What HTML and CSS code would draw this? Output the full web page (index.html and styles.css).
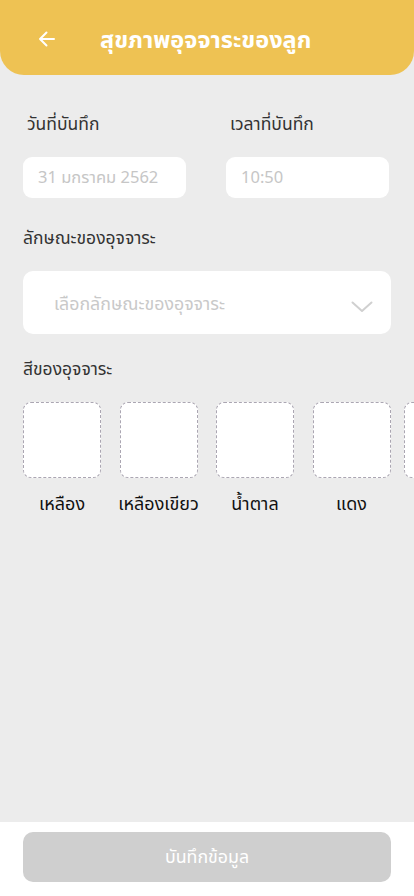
FILE: index.html
```html
<!DOCTYPE html>
<html lang="th">
<head>
<meta charset="utf-8">
<link rel="stylesheet" href="styles.css">
</head>
<body>
<div class="app">
  <header class="header">
    <svg class="back" width="20" height="20" viewBox="0 0 20 20"><path d="M17 10H3M9.5 3.5L3 10l6.5 6.5" fill="none" stroke="#fff" stroke-width="2" stroke-linecap="round" stroke-linejoin="round"/></svg>
    <h1 class="title">สุขภาพอุจจาระของลูก</h1>
  </header>
  <main class="content">
    <div class="row2">
      <div class="field">
        <div class="label">วันที่บันทึก</div>
        <div class="input">31 มกราคม 2562</div>
      </div>
      <div class="field">
        <div class="label">เวลาที่บันทึก</div>
        <div class="input">10:50</div>
      </div>
    </div>
    <div class="label label-wide">ลักษณะของอุจจาระ</div>
    <div class="select">
      <span>เลือกลักษณะของอุจจาระ</span>
      <svg width="22" height="12" viewBox="0 0 22 12"><path d="M1.5 1.5L11 10l9.5-8.5" fill="none" stroke="#d0d0d0" stroke-width="2" stroke-linecap="round" stroke-linejoin="round"/></svg>
    </div>
    <div class="label label-wide">สีของอุจจาระ</div>
    <div class="swatches">
      <div class="swatch"><div class="box"></div><div class="name">เหลือง</div></div>
      <div class="swatch"><div class="box"></div><div class="name">เหลืองเขียว</div></div>
      <div class="swatch"><div class="box"></div><div class="name">น้ำตาล</div></div>
      <div class="swatch"><div class="box"></div><div class="name">แดง</div></div>
      <div class="swatch swatch-last"><div class="box"></div></div>
    </div>
  </main>
  <footer class="footer">
    <button class="save">บันทึกข้อมูล</button>
  </footer>
</div>
</body>
</html>
```
FILE: styles.css
```css
* { box-sizing: border-box; }
html, body { margin: 0; padding: 0; }
body {
  background: #ececec;
  font-family: "Noto Sans Thai", "Noto Sans Thai UI", "Noto Sans", sans-serif;
  color: #222;
}
.app {
  width: 414px;
  height: 896px;
  display: flex;
  flex-direction: column;
  overflow: hidden;
}
.header {
  height: 75px;
  background: #eec253;
  border-radius: 0 0 24px 24px;
  display: flex;
  align-items: center;
  padding: 6px 0 0 37px;
  flex-shrink: 0;
}
.back { display: block; margin-top: -3px; }
.title {
  margin: 0 0 0 43px;
  color: #fff;
  font-size: 23.5px;
  font-weight: 700;
}
.content {
  flex: 1;
  padding: 38px 0 0 23px;
  overflow: hidden;
}
.row2 { display: flex; gap: 40px; }
.field { width: 163px; }
.label {
  font-size: 17.5px;
  color: #333;
  line-height: 24px;
  padding-left: 4px;
  height: 24px;
}
.label-wide { padding-left: 0; }
.input {
  margin-top: 20px;
  height: 41px;
  background: #fff;
  border-radius: 9px;
  font-size: 16.5px;
  color: #c6c6c6;
  display: flex;
  align-items: center;
  padding-left: 15px;
}
.row2 + .label { margin-top: 29px; }
.select {
  margin-top: 20px;
  width: 368px;
  height: 63px;
  background: #fff;
  border-radius: 10px;
  display: flex;
  align-items: center;
  justify-content: space-between;
  padding: 4px 18px 0 31px;
  font-size: 17.8px;
  color: #c9c9c9;
}
.select svg { margin-top: 4px; }
.select + .label { margin-top: 24px; }
.swatches {
  margin-top: 20px;
  display: flex;
  gap: 18.5px;
  width: 391px;
  overflow: hidden;
}
.swatch {
  flex: 0 0 78px;
  min-width: 0;
  display: flex;
  flex-direction: column;
  align-items: center;
}
.swatch-last { margin-left: -5px; }
.box {
  width: 78px;
  height: 76px;
  flex-shrink: 0;
  background: #fff;
  border: 1px dashed #aba6b2;
  border-radius: 8px;
}
.name {
  margin-top: 13px;
  font-size: 18px;
  color: #111;
  white-space: nowrap;
}
.footer {
  height: 74px;
  background: #fff;
  flex-shrink: 0;
  padding: 10px 23px 0;
}
.save {
  width: 368px;
  height: 50px;
  border: 0;
  border-radius: 10px;
  background: #cfcfcf;
  color: #fff;
  font-family: inherit;
  font-size: 17.8px;
}
```
